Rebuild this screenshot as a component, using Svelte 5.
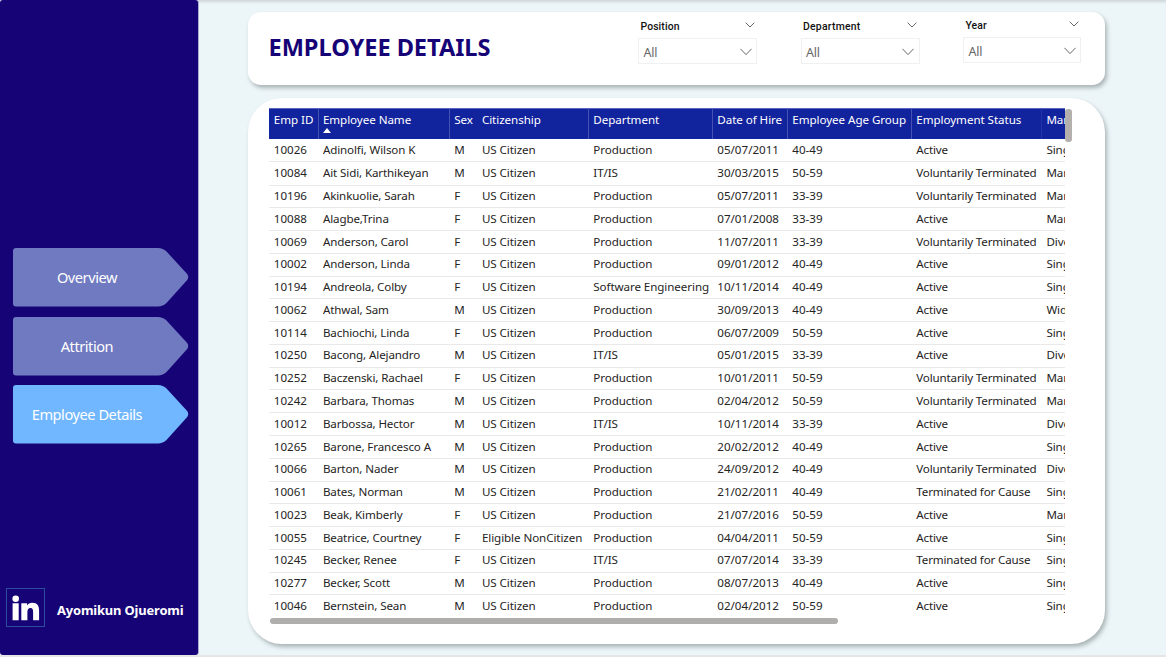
<script>
  const nav = ['Overview', 'Attrition', 'Employee Details'];
  const active = 'Employee Details';
  const filters = ['Position', 'Department', 'Year'];
  const columns = ['Emp ID', 'Employee Name', 'Sex', 'Citizenship', 'Department', 'Date of Hire', 'Employee Age Group', 'Employment Status', 'Marital'];
  const US = 'US Citizen', P = 'Production', A = 'Active', V = 'Voluntarily Terminated', T = 'Terminated for Cause';
  const rows = [
    ['10026', 'Adinolfi, Wilson K', 'M', US, P, '05/07/2011', '40-49', A, 'Single'],
    ['10084', 'Ait Sidi, Karthikeyan', 'M', US, 'IT/IS', '30/03/2015', '50-59', V, 'Married'],
    ['10196', 'Akinkuolie, Sarah', 'F', US, P, '05/07/2011', '33-39', V, 'Married'],
    ['10088', 'Alagbe,Trina', 'F', US, P, '07/01/2008', '33-39', A, 'Married'],
    ['10069', 'Anderson, Carol', 'F', US, P, '11/07/2011', '33-39', V, 'Divorced'],
    ['10002', 'Anderson, Linda', 'F', US, P, '09/01/2012', '40-49', A, 'Single'],
    ['10194', 'Andreola, Colby', 'F', US, 'Software Engineering', '10/11/2014', '40-49', A, 'Single'],
    ['10062', 'Athwal, Sam', 'M', US, P, '30/09/2013', '40-49', A, 'Widowed'],
    ['10114', 'Bachiochi, Linda', 'F', US, P, '06/07/2009', '50-59', A, 'Single'],
    ['10250', 'Bacong, Alejandro', 'M', US, 'IT/IS', '05/01/2015', '33-39', A, 'Divorced'],
    ['10252', 'Baczenski, Rachael', 'F', US, P, '10/01/2011', '50-59', V, 'Married'],
    ['10242', 'Barbara, Thomas', 'M', US, P, '02/04/2012', '50-59', V, 'Married'],
    ['10012', 'Barbossa, Hector', 'M', US, 'IT/IS', '10/11/2014', '33-39', A, 'Divorced'],
    ['10265', 'Barone, Francesco A', 'M', US, P, '20/02/2012', '40-49', A, 'Single'],
    ['10066', 'Barton, Nader', 'M', US, P, '24/09/2012', '40-49', V, 'Divorced'],
    ['10061', 'Bates, Norman', 'M', US, P, '21/02/2011', '40-49', T, 'Single'],
    ['10023', 'Beak, Kimberly', 'F', US, P, '21/07/2016', '50-59', A, 'Married'],
    ['10055', 'Beatrice, Courtney', 'F', 'Eligible NonCitizen', P, '04/04/2011', '50-59', A, 'Single'],
    ['10245', 'Becker, Renee', 'F', US, 'IT/IS', '07/07/2014', '33-39', T, 'Single'],
    ['10277', 'Becker, Scott', 'M', US, P, '08/07/2013', '40-49', A, 'Single'],
    ['10046', 'Bernstein, Sean', 'M', US, P, '02/04/2012', '50-59', A, 'Single']
  ];
</script>

<div class="page">
  <aside>
    <nav>
      {#each nav as item}
        <a class:active={item === active}>
          <svg width="176" height="59" viewBox="0 0 176 59">
            <path d="M3 0H145Q150 0 153.5 3.5L174.2 26Q176.2 29 174.2 32L153.5 55Q150 58.4 145 58.4H3Q0 58.4 0 55.4V3Q0 0 3 0Z" />
          </svg>
          <span>{item}</span>
        </a>
      {/each}
    </nav>
    <footer>
      <svg class="linkedin" width="39" height="39" viewBox="0 0 39 39">
        <rect x=".5" y=".5" width="38" height="38" fill="none" stroke="#2c4d9c" />
        <circle cx="9.7" cy="10.8" r="3.3" />
        <path d="M6.6 15.2h6.1V32.2H6.6zM15.3 15.2h5.7v2.2c1-1.7 2.9-2.6 5.2-2.6 5.3 0 6.9 3.1 6.9 8v9.4h-6v-8.2c0-2.3-.3-4-2.6-4s-3.1 1.7-3.1 4v8.2h-6.1z" />
      </svg>
      <strong>Ayomikun Ojueromi</strong>
    </footer>
  </aside>

  <main>
    <header class="card">
      <h1>EMPLOYEE DETAILS</h1>
      <div class="filters">
        {#each filters as label}
          <section>
            <div class="label">
              <b>{label}</b>
              <svg width="10" height="6" viewBox="0 0 10 6"><path d="M.7 .7L5 5L9.3 .7" /></svg>
            </div>
            <div class="select">
              <span>All</span>
              <svg width="12" height="8" viewBox="0 0 12 8"><path d="M.4 .8L6 6.6L11.6 .8" /></svg>
            </div>
          </section>
        {/each}
      </div>
    </header>

    <div class="card table-card">
      <div class="viewport">
        <div class="grid">
          <div class="row head">
            {#each columns as name, i}
              <div>{name}{#if i === 1}<i></i>{/if}</div>
            {/each}
          </div>
          {#each rows as row}
            <div class="row">
              {#each row as cell}<div>{cell}</div>{/each}
            </div>
          {/each}
        </div>
        <div class="vthumb"></div>
      </div>
      <div class="hthumb"></div>
    </div>
  </main>
</div>

<style>
  :global(body) { margin: 0; background: #e6e6e6; overflow: hidden; }
  * { box-sizing: border-box; }
  .page {
    width: 1166px; height: 655px; display: flex; background: #ecf5f8;
    box-shadow: inset 0 4px 3px -2px #cfd6d9;
    font-family: "Noto Sans", "Open Sans", sans-serif;
  }
  aside {
    width: 198px; height: 655px; flex: none; background: #160376; border-radius: 3px;
    box-shadow: 1px 0 0 #a9abd0; padding: 248px 0 28px 12.7px;
    display: flex; flex-direction: column; justify-content: space-between;
  }
  nav { display: flex; flex-direction: column; gap: 9.5px; }
  nav a { display: grid; width: 176px; height: 59px; fill: #707ac1; color: #fff; }
  nav a.active { fill: #70b7ff; }
  nav a svg, nav a span { grid-area: 1 / 1; }
  nav a span { width: 148.5px; text-align: center; font-size: 14.6px; line-height: 59px; letter-spacing: -.45px; }
  footer { display: flex; align-items: center; margin-left: -6.7px; }
  .linkedin { fill: #fff; flex: none; }
  strong { margin: 5px 0 0 12px; color: #fff; font-size: 12.9px; line-height: 18px; white-space: nowrap; letter-spacing: -.15px; }
  main { padding: 12px 0 0 50px; }
  .card { width: 857px; background: #fff; box-shadow: 2px 3px 4px #aab4b6; }
  header { height: 73px; border-radius: 13px; display: flex; padding-left: 21px; }
  h1 { margin: 0 0 0 -.5px; width: 369.5px; font-size: 23.6px; line-height: 70px; color: #160376; white-space: nowrap; letter-spacing: -.05px; }
  .filters { display: flex; gap: 43.5px; }
  section { width: 119px; padding-top: 8px; }
  section:last-child { width: 118px; padding-top: 7px; }
  .label { display: flex; align-items: center; justify-content: space-between; height: 13px; padding: 0 2.5px 0 2.5px; }
  .label b { font: 500 10.4px/13px Roboto, sans-serif; letter-spacing: .1px; color: #111; }
  section:nth-child(2) b { letter-spacing: .25px; }
  .label svg { margin-top: -3px; }
  .label svg, .select svg { fill: none; stroke: #666; stroke-width: 1; }
  .select { margin-top: 5px; height: 26px; border: 1.5px solid #f0f0f0; display: flex; align-items: center; justify-content: space-between; padding: 1px 4.5px 0 4.5px; }
  .select span { color: #666; font-size: 12.5px; letter-spacing: -.2px; padding-top: 2px; }
  .table-card { height: 546px; margin-top: 13px; border-radius: 34px; padding: 10px 0 0 21px; }
  .viewport { display: flex; align-items: flex-start; width: 804px; height: 509px; }
  .grid { width: 796px; overflow: hidden; flex: none; }
  .row { display: grid; grid-template-columns: 49.5px 131px 28px 111px 124px 75px 124px 130.5px 60px; width: 840px; height: 22.77px; }
  .row div { border-bottom: 1px solid #e9e9e9; padding-left: 4.8px; font-size: 11.6px; line-height: 23.2px; letter-spacing: -.08px; color: #252423; white-space: nowrap; }
  .row:nth-child(2) div { line-height: 22px; }
  .row div:nth-child(1), .row div:nth-child(6), .row div:nth-child(7) { letter-spacing: 0; }
  .row div:nth-child(2), .row div:nth-child(4), .row div:nth-child(9) { padding-left: 4.4px; }
  .row:not(.head) div:nth-child(2) { letter-spacing: -.12px; }
  .row:not(.head) div:nth-child(8) { letter-spacing: -.16px; }
  .head { height: 30.6px; background: #12239e; }
  .row.head div { color: #fff; border: 0; border-top: 1px solid #5a66bb; line-height: 22px; border-right: 1px solid #4551b3; letter-spacing: -.05px; }
  .row.head div:nth-child(3) { border-right: 0; }
  .row.head div:nth-child(8) { border-right-color: #2434a6; }
  .head i { display: block; width: 0; border: 4.5px solid transparent; border-top: 0; border-bottom: 5px solid #fff; margin-top: -3px; }
  .vthumb { width: 7px; height: 33px; margin-top: 1px; border-radius: 3px; background: #b3b0ad; }
  .hthumb { width: 568px; height: 6px; margin: 1px 0 0 1px; border-radius: 3px; background: #b0aeac; }
</style>
